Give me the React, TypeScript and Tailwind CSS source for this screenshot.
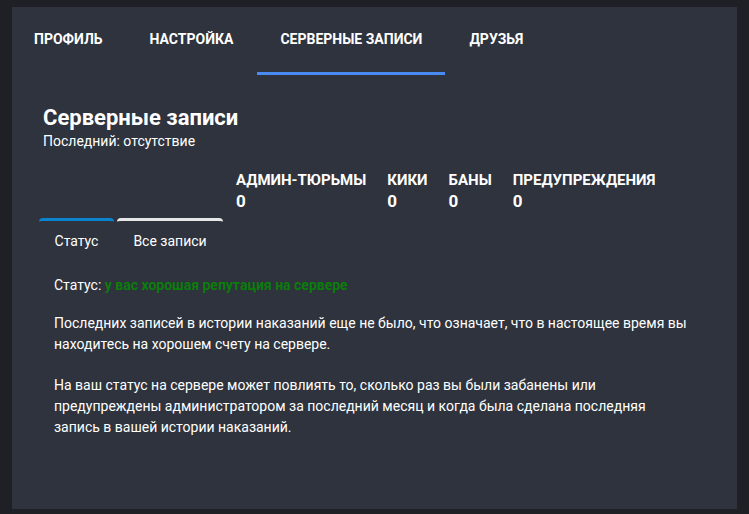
import { useState } from "react"

const tabs = ["Профиль", "Настройка", "Серверные записи", "Друзья"]

const stats = [
  { label: "Админ-тюрьмы", value: 0 },
  { label: "Кики", value: 0 },
  { label: "Баны", value: 0 },
  { label: "Предупреждения", value: 0 },
]

export default function App() {
  const [active, setActive] = useState(2)
  const [sub, setSub] = useState(0)

  return (
    <div className="min-h-[514px] w-full bg-[#1e2026] pt-[7px] pl-[12px] [font-family:Roboto,'Noto_Sans',sans-serif] text-white">
      <div className="w-[725px] h-[502px] bg-[#2e333d] flex flex-col">
        <div className="flex gap-[1px] -ml-[1px] h-[68px]">
          {tabs.map((t, i) => (
            <div
              key={t}
              onClick={() => setActive(i)}
              className={
                "px-[23px] pt-[24px] uppercase font-bold text-[14px] leading-[16px] cursor-pointer border-b-[3px] " +
                (i === active ? "border-[#4a8af4]" : "border-transparent")
              }
            >
              {t}
            </div>
          ))}
        </div>

        <div className="pl-[31px] pt-[30px] flex flex-col">
          <h1 className="text-[22px] leading-[26px] font-bold">Серверные записи</h1>
          <p className="mt-[2px] text-[14px] leading-[16px]">Последний: отсутствие</p>

          <div className="mt-[23px] ml-[193px] flex gap-[21px]">
            {stats.map((s) => (
              <div key={s.label} className="flex flex-col">
                <span className="uppercase font-bold text-[15px] leading-[16px]">{s.label}</span>
                <span className="mt-[3px] font-bold text-[17px] leading-[20px]">{s.value}</span>
              </div>
            ))}
          </div>

          <div className="mt-[7px] -ml-[4px] flex gap-[3px]">
            <div
              onClick={() => setSub(0)}
              className={
                "w-[75px] border-t-[3px] rounded-t-[4px] pt-[10px] pb-[10px] text-center text-[14px] leading-[20px] cursor-pointer " +
                (sub === 0 ? "border-[#0a84cf]" : "border-[#e6e6e6]")
              }
            >
              Статус
            </div>
            <div
              onClick={() => setSub(1)}
              className={
                "w-[106px] border-t-[3px] rounded-t-[4px] pt-[10px] pb-[10px] text-center text-[14px] leading-[20px] cursor-pointer " +
                (sub === 1 ? "border-[#0a84cf]" : "border-[#e6e6e6]")
              }
            >
              Все записи
            </div>
          </div>

          <div className="pl-[11px] pt-[14px] w-[650px] text-[14px]">
            <p className="leading-[20px]">
              Статус: <span className="font-bold text-[#0b7d0b]">у вас хорошая репутация на сервере</span>
            </p>
            <p className="mt-[18px] leading-[21px]">
              Последних записей в истории наказаний еще не было, что означает, что в настоящее время вы находитесь на хорошем счету на сервере.
            </p>
            <p className="mt-[20px] leading-[21px]">
              На ваш статус на сервере может повлиять то, сколько раз вы были забанены или предупреждены администратором за последний месяц и когда была сделана последняя запись в вашей истории наказаний.
            </p>
          </div>
        </div>
      </div>
    </div>
  )
}
